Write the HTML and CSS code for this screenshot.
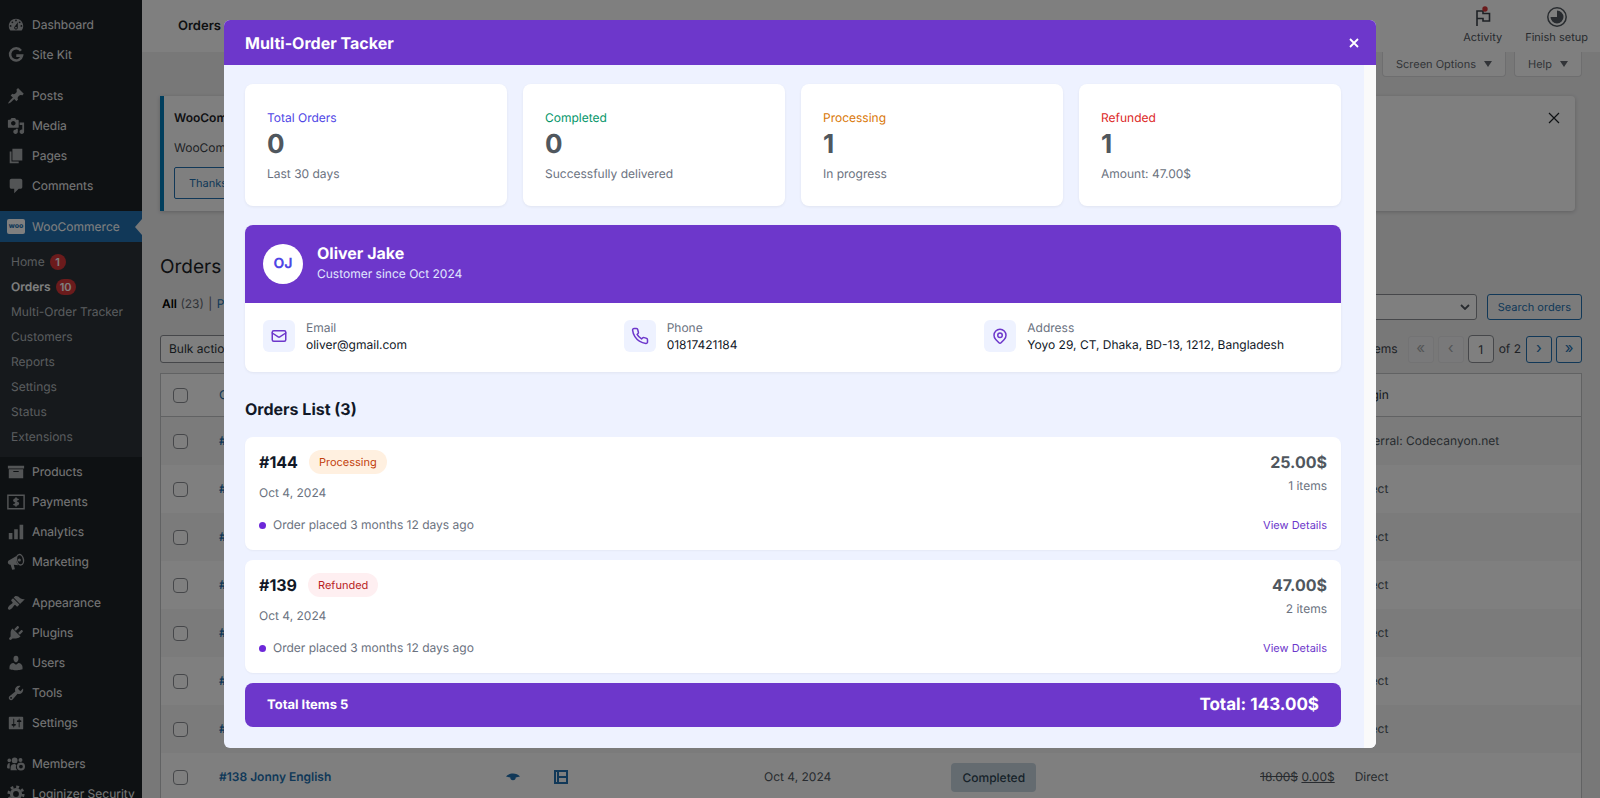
FILE: index.html
```html
<!DOCTYPE html>
<html lang="en">
<head>
<meta charset="utf-8">
<title>Orders</title>
<meta name="viewport" content="width=device-width, initial-scale=1">
<link rel="stylesheet" href="styles.css">
</head>
<body>
<div class="app">
  <nav class="sidebar" aria-label="Main menu">
    <ul class="menu">
      <li><a class="menu-link" href="#"><svg class="menu-icon" viewBox="0 0 20 20"><path d="M3.76 16h12.48c1.1-1.37 1.76-3.11 1.76-5 0-4.42-3.58-8-8-8s-8 3.58-8 8c0 1.89.66 3.63 1.76 5zM10 4c.55 0 1 .45 1 1s-.45 1-1 1-1-.45-1-1 .45-1 1-1zM6 6c.55 0 1 .45 1 1s-.45 1-1 1-1-.45-1-1 .45-1 1-1zm8 0c.55 0 1 .45 1 1s-.45 1-1 1-1-.45-1-1 .45-1 1-1zm-5.370 5.550L12 7v6c0 1.100-.9 2-2 2s-2-.9-2-2c0-.57.24-1.080.63-1.450zM4 10c.55 0 1 .45 1 1s-.45 1-1 1-1-.45-1-1 .45-1 1-1zm12 0c.55 0 1 .45 1 1s-.45 1-1 1-1-.45-1-1 .45-1 1-1zm-5 3c0-.55-.45-1-1-1s-1 .45-1 1 .45 1 1 1 1-.45 1-1z"/></svg>Dashboard</a></li>
      <li><a class="menu-link" href="#"><svg class="menu-icon" viewBox="0 0 20 20"><path fill="none" stroke="currentColor" stroke-width="2.800" d="M15.500 5.300A6.700 6.700 0 1 0 16.700 10.700H10.300"/></svg>Site Kit</a></li>
      <li class="menu-gap"><a class="menu-link" href="#"><svg class="menu-icon" viewBox="0 0 20 20"><path d="M10.440 3.020l1.820-1.820 6.360 6.350-1.830 1.820c-1.050-.68-2.480-.57-3.410.36l-.75.75c-.92.93-1.040 2.350-.35 3.410l-1.830 1.820-2.410-2.410-2.800 2.790c-.42.42-3.380 2.710-3.800 2.290s1.860-3.390 2.280-3.810l2.790-2.790L4.100 9.360l1.830-1.820c1.050.69 2.480.57 3.400-.36l.75-.75c.93-.92 1.050-2.350.36-3.410z"/></svg>Posts</a></li>
      <li><a class="menu-link" href="#"><svg class="menu-icon" viewBox="0 0 20 20"><path fill-rule="evenodd" d="M13 11V4c0-.55-.45-1-1-1h-1.670L9 1H5L3.670 3H2c-.55 0-1 .45-1 1v7c0 .55.45 1 1 1h10c.55 0 1-.45 1-1zM7 4.500c1.380 0 2.500 1.120 2.500 2.500S8.380 9.500 7 9.500 4.500 8.380 4.500 7 5.620 4.500 7 4.500zM14 6h5v10.500c0 1.380-1.120 2.500-2.500 2.500S14 17.880 14 16.500s1.120-2.500 2.500-2.500c.17 0 .34.02.5.05V9h-3V6zm-4 8.050V13h2v3.500c0 1.380-1.120 2.500-2.500 2.500S7 17.880 7 16.500 8.120 14 9.500 14c.17 0 .34.02.5.05z"/></svg>Media</a></li>
      <li><a class="menu-link" href="#"><svg class="menu-icon" viewBox="0 0 20 20"><path d="M6 15V2h11v13H6zm-1 1h8v2H3V5h2v11z"/></svg>Pages</a></li>
      <li><a class="menu-link" href="#"><svg class="menu-icon" viewBox="0 0 20 20"><path d="M5 2h10c1.100 0 2 .9 2 2v7c0 1.100-.9 2-2 2h-2l-5 5v-5H5c-1.100 0-2-.9-2-2V4c0-1.100.9-2 2-2z"/></svg>Comments</a></li>
      <li class="menu-gap current">
        <a class="menu-link menu-link-current" href="#"><span class="woo-icon">woo</span>WooCommerce</a>
        <ul class="submenu">
          <li><a href="#">Home <span class="count">1</span></a></li>
          <li><a class="active" href="#">Orders <span class="count">10</span></a></li>
          <li><a href="#">Multi-Order Tracker</a></li>
          <li><a href="#">Customers</a></li>
          <li><a href="#">Reports</a></li>
          <li><a href="#">Settings</a></li>
          <li><a href="#">Status</a></li>
          <li><a href="#">Extensions</a></li>
        </ul>
      </li>
      <li><a class="menu-link" href="#"><svg class="menu-icon" viewBox="0 0 20 20"><path d="M19 3v3H1V3h18zM2 7h16v10H2V7zm11 3V9H7v1h6z"/></svg>Products</a></li>
      <li><a class="menu-link" href="#"><svg class="menu-icon" viewBox="0 0 20 20"><path fill="none" stroke="currentColor" stroke-width="1.600" d="M1 2.500h18v15H1z"/><path fill="none" stroke="currentColor" stroke-width="2" d="M12.700 7.700C12 6.800 8 6.300 7.700 8.200c-.2 2.200 4.800 1.300 4.800 3.600-.2 2-4.300 1.600-5.200.5M10 5v10"/></svg>Payments</a></li>
      <li><a class="menu-link" href="#"><svg class="menu-icon" viewBox="0 0 20 20"><path d="M2 11h4v7H2zM8 7h4v11H8zM14 2h4v16h-4z"/></svg>Analytics</a></li>
      <li><a class="menu-link" href="#"><svg class="menu-icon" viewBox="0 0 20 20"><path d="M1.500 8.500 11 3c-1.500 3-1 8 1.500 10.500l-5-.5 1.300 5-3 .7L4 13l-1.500-.3C.8 12 .5 9.500 1.500 8.500z"/><ellipse cx="14.500" cy="7.500" rx="3.800" ry="5.800" transform="rotate(-12 14.500 7.500)" fill="none" stroke="currentColor" stroke-width="1.600"/><circle cx="13.800" cy="7.800" r="1.700"/></svg>Marketing</a></li>
      <li class="menu-gap"><a class="menu-link" href="#"><svg class="menu-icon" viewBox="0 0 20 20"><path d="M14.480 11.060L7.410 3.990l1.500-1.500c.5-.56 2.300-.47 3.510.32 1.210.8 1.430 1.280 2.910 2.100 1.180.64 2.450 1.260 4.450.85zm-.71.71L6.700 4.700 4.930 6.470c-.39.39-.39 1.020 0 1.410l1.060 1.060c.39.39.39 1.030 0 1.420-.6.6-1.430 1.110-2.210 1.690-.35.26-.7.53-1.010.84C1.430 14.230.4 16.080 1.400 17.070c.99 1 2.840-.03 4.180-1.360.31-.31.58-.66.85-1.020.57-.78 1.080-1.610 1.690-2.210.39-.39 1.020-.39 1.410 0l1.060 1.060c.39.39 1.020.39 1.410 0z"/></svg>Appearance</a></li>
      <li><a class="menu-link" href="#"><svg class="menu-icon" viewBox="0 0 20 20"><path d="M13.110 4.360L9.870 7.600 8 5.730l3.240-3.240c.35-.34 1.050-.2 1.560.32.52.51.66 1.210.31 1.550zm-8 1.770l.91-1.120 9.010 9.010-1.190.84c-.71.71-2.630 1.160-3.820 1.160H6.140L4.900 17.260c-.59.59-1.540.59-2.120 0-.59-.58-.59-1.530 0-2.120l1.240-1.240v-3.880c0-1.130.4-3.190 1.090-3.890zm7.260 3.970l3.240-3.240c.34-.35 1.040-.21 1.550.31.52.51.66 1.210.31 1.550l-3.240 3.250z"/></svg>Plugins</a></li>
      <li><a class="menu-link" href="#"><svg class="menu-icon" viewBox="0 0 20 20"><path d="M10 9.250c-2.270 0-2.730-3.440-2.730-3.440C7 4.020 7.820 2 9.970 2c2.160 0 2.980 2.020 2.710 3.810 0 0-.41 3.440-2.680 3.440zm0 2.570L12.720 10c2.390 0 4.520 2.330 4.520 4.530v2.490s-3.650 1.130-7.240 1.130c-3.650 0-7.240-1.130-7.240-1.130v-2.490c0-2.250 1.940-4.480 4.470-4.480z"/></svg>Users</a></li>
      <li><a class="menu-link" href="#"><svg class="menu-icon" viewBox="0 0 20 20"><path d="M16.680 9.770c-1.340 1.340-3.300 1.670-4.950.99l-5.410 6.520c-.99.99-2.590.99-3.580 0s-.99-2.590 0-3.570l6.520-5.420c-.68-1.650-.35-3.610.99-4.950 1.280-1.280 3.120-1.620 4.720-1.060l-2.890 2.890 2.820 2.820 2.860-2.870c.53 1.580.18 3.390-1.080 4.650zM3.810 16.210c.4.39 1.040.39 1.430 0 .4-.4.4-1.040 0-1.430-.39-.4-1.030-.4-1.430 0-.39.39-.39 1.030 0 1.430z"/></svg>Tools</a></li>
      <li><a class="menu-link" href="#"><svg class="menu-icon" viewBox="0 0 20 20"><path d="M18 16V4c0-.55-.45-1-1-1H3c-.55 0-1 .45-1 1v12c0 .55.45 1 1 1h14c.55 0 1-.45 1-1zM8 11h1c.55 0 1 .45 1 1s-.45 1-1 1H8v1.500c0 .28-.22.5-.5.5s-.5-.22-.5-.5V13H6c-.55 0-1-.45-1-1s.45-1 1-1h1V5.500c0-.28.22-.5.5-.5s.5.22.5.5V11zm5-2h-1c-.55 0-1-.45-1-1s.45-1 1-1h1V5.500c0-.28.22-.5.5-.5s.5.22.5.5V7h1c.55 0 1 .45 1 1s-.45 1-1 1h-1v5.500c0 .28-.22.5-.5.5s-.5-.22-.5-.5V9z"/></svg>Settings</a></li>
      <li class="menu-gap"><a class="menu-link" href="#"><svg class="menu-icon" viewBox="0 0 20 20"><circle cx="2.500" cy="6" r="2"/><circle cx="8.500" cy="6" r="3.200"/><path d="M0 14c0-3 1-5 3-5v6H1zM4 17v-3c0-3 2-4 4.500-4l2 1c-1 2-1 4 1 6z"/><circle cx="15.500" cy="12.800" r="3.300" fill="none" stroke="currentColor" stroke-width="2.400"/><circle cx="15" cy="5.500" r="2.200"/></svg>Members</a></li>
      <li><a class="menu-link" href="#"><svg class="menu-icon" viewBox="0 0 20 20"><circle cx="10" cy="10" r="5" fill="none" stroke="currentColor" stroke-width="3.500"/><circle cx="10" cy="10" r="8" fill="none" stroke="currentColor" stroke-width="3" stroke-dasharray="3.140 3.140"/></svg>Loginizer Security</a></li>
    </ul>
  </nav>

  <div class="main">
    <header class="topbar">
      <h2 class="topbar-title">Orders</h2>
      <div class="topbar-actions">
        <button class="top-action" type="button"><svg width="22" height="22" viewBox="0 0 22 22"><path d="M5 20V5h6v2.500h6.500V15H11v-2.500H5" fill="none" stroke="#3c434a" stroke-width="1.600"/><circle cx="13" cy="3" r="2.700" fill="#d63638"/></svg>Activity</button>
        <button class="top-action" type="button"><svg width="22" height="22" viewBox="0 0 22 22"><circle cx="11" cy="11" r="9.200" fill="none" stroke="#50575e" stroke-width="1.500"/><path d="M11 4.500a6.500 6.500 0 1 1-6.500 6.500H11z" fill="#50575e"/></svg>Finish setup</button>
      </div>
    </header>

    <div class="page">
      <div class="screen-tabs">
        <button class="screen-tab" type="button">Screen Options <span class="caret"></span></button>
        <button class="screen-tab" type="button">Help <span class="caret"></span></button>
      </div>

      <section class="notice">
        <div class="notice-body">
          <h3>WooCommerce</h3>
          <p>WooCommerce</p>
          <button class="btn-outline notice-btn" type="button">Thanks</button>
        </div>
        <button class="notice-close" type="button" aria-label="Dismiss"><svg width="12" height="12" viewBox="0 0 12 12"><path d="M1 1l10 10M11 1L1 11" stroke="#1d2327" stroke-width="1.200"/></svg></button>
      </section>

      <h1 class="page-title">Orders</h1>

      <div class="filters">
        <div class="status-links"><a class="all" href="#">All</a> (23) <span class="sep">|</span> <a href="#">Processing</a></div>
        <div class="search-row">
          <span class="select-wrap select-search"><select aria-label="Search filter"><option>All</option></select><svg class="chev" width="10" height="6" viewBox="0 0 10 6"><path d="M1 1l4 4 4-4" fill="none" stroke="#50575e" stroke-width="1.800"/></svg></span>
          <button class="btn-outline" type="button">Search orders</button>
        </div>
      </div>

      <div class="filters tablenav">
        <span class="select-wrap select-bulk"><select aria-label="Bulk actions"><option>Bulk actions</option></select></span>
        <div class="pagination">
          <span class="items">23 items</span>
          <button class="page-btn" type="button" disabled aria-label="First page">«</button>
          <button class="page-btn" type="button" disabled aria-label="Previous page">‹</button>
          <input class="page-input" type="text" value="1" aria-label="Current page">
          <span class="of">of 2</span>
          <button class="page-btn" type="button" aria-label="Next page">›</button>
          <button class="page-btn" type="button" aria-label="Last page">»</button>
        </div>
      </div>

      <table class="orders">
        <colgroup><col class="c-check"><col class="c-order"><col class="c-eye"><col class="c-film"><col class="c-date"><col class="c-status"><col class="c-total"><col></colgroup>
        <thead>
          <tr><th><input type="checkbox" aria-label="Select all"></th><th><a href="#">Order</a></th><th></th><th></th><th></th><th></th><th></th><th>Origin</th></tr>
        </thead>
        <tbody>
          <tr><td><input type="checkbox" aria-label="Select order"></td><td><a class="order-link" href="#">#145</a></td><td></td><td></td><td></td><td></td><td></td><td>Referral: Codecanyon.net</td></tr>
          <tr><td><input type="checkbox" aria-label="Select order"></td><td><a class="order-link" href="#">#144</a></td><td></td><td></td><td></td><td></td><td></td><td>Direct</td></tr>
          <tr><td><input type="checkbox" aria-label="Select order"></td><td><a class="order-link" href="#">#143</a></td><td></td><td></td><td></td><td></td><td></td><td>Direct</td></tr>
          <tr><td><input type="checkbox" aria-label="Select order"></td><td><a class="order-link" href="#">#142</a></td><td></td><td></td><td></td><td></td><td></td><td>Direct</td></tr>
          <tr><td><input type="checkbox" aria-label="Select order"></td><td><a class="order-link" href="#">#141</a></td><td></td><td></td><td></td><td></td><td></td><td>Direct</td></tr>
          <tr><td><input type="checkbox" aria-label="Select order"></td><td><a class="order-link" href="#">#140</a></td><td></td><td></td><td></td><td></td><td></td><td>Direct</td></tr>
          <tr><td><input type="checkbox" aria-label="Select order"></td><td><a class="order-link" href="#">#139</a></td><td></td><td></td><td></td><td></td><td></td><td>Direct</td></tr>
          <tr><td><input type="checkbox" aria-label="Select order"></td><td><a class="order-link" href="#">#138 Jonny English</a></td>
            <td><svg class="cell-icon" width="14" height="14" viewBox="0 0 14 14"><path d="M0 6.500C3 2.500 11 2.500 14 6.500L9.700 7.500a2.700 2.700 0 0 1-5.400 0z" fill="#2271b1"/></svg></td>
            <td><svg class="cell-icon" width="14" height="14" viewBox="0 0 14 14"><path d="M1 1h12v12H1zM4 1v12M4 7h9" fill="none" stroke="#2271b1" stroke-width="2"/></svg></td>
            <td>Oct 4, 2024</td><td><span class="status-pill">Completed</span></td><td class="amount"><del>18.00$</del> <ins>0.00$</ins></td><td>Direct</td></tr>
        </tbody>
      </table>
    </div>
  </div>
</div>

<div class="overlay">
  <div class="modal" role="dialog" aria-modal="true" aria-labelledby="modal-title">
    <header class="modal-head">
      <h2 id="modal-title">Multi-Order Tacker</h2>
      <button class="modal-close" type="button" aria-label="Close"><svg width="10" height="10" viewBox="0 0 10 10"><path d="M1 1l8 8M9 1L1 9" stroke="#fff" stroke-width="1.800"/></svg></button>
    </header>
    <div class="modal-body">
      <div class="stats">
        <article class="stat"><h3 class="indigo">Total Orders</h3><strong>0</strong><p>Last 30 days</p></article>
        <article class="stat"><h3 class="green">Completed</h3><strong>0</strong><p>Successfully delivered</p></article>
        <article class="stat"><h3 class="amber">Processing</h3><strong>1</strong><p>In progress</p></article>
        <article class="stat"><h3 class="red">Refunded</h3><strong>1</strong><p>Amount: 47.00$</p></article>
      </div>

      <section class="customer">
        <div class="customer-head">
          <span class="avatar">OJ</span>
          <div class="customer-name"><h3>Oliver Jake</h3><p>Customer since Oct 2024</p></div>
        </div>
        <div class="contacts">
          <div class="contact"><span class="contact-icon"><svg viewBox="0 0 24 24"><rect x="3" y="5" width="18" height="14" rx="2"/><path d="M3 8l7.900 5.260a2 2 0 0 0 2.200 0L21 8"/></svg></span><div><span class="contact-label">Email</span><span class="contact-value">oliver@gmail.com</span></div></div>
          <div class="contact"><span class="contact-icon"><svg viewBox="0 0 24 24"><path d="M22 16.920v3a2 2 0 0 1-2.180 2 19.790 19.790 0 0 1-8.630-3.070 19.500 19.500 0 0 1-6-6 19.790 19.790 0 0 1-3.070-8.670A2 2 0 0 1 4.110 2h3a2 2 0 0 1 2 1.720c.13.96.36 1.900.7 2.810a2 2 0 0 1-.45 2.110L8.090 9.910a16 16 0 0 0 6 6l1.270-1.270a2 2 0 0 1 2.110-.45c.91.34 1.850.57 2.810.7A2 2 0 0 1 22 16.920z"/></svg></span><div><span class="contact-label">Phone</span><span class="contact-value">01817421184</span></div></div>
          <div class="contact"><span class="contact-icon"><svg viewBox="0 0 24 24"><path d="M17.657 16.657L13.414 20.900a2 2 0 0 1-2.827 0l-4.244-4.243a8 8 0 1 1 11.314 0z"/><circle cx="12" cy="11" r="3"/></svg></span><div><span class="contact-label">Address</span><span class="contact-value">Yoyo 29, CT, Dhaka, BD-13, 1212, Bangladesh</span></div></div>
        </div>
      </section>

      <h3 class="list-title">Orders List (3)</h3>

      <div class="order-list">
        <article class="order">
          <div class="order-row"><div class="order-id"><h4>#144</h4><span class="badge badge-processing">Processing</span></div><strong class="price">25.00$</strong></div>
          <div class="order-row order-meta"><span>Oct 4, 2024</span><span class="qty">1 items</span></div>
          <div class="order-row order-foot"><span class="placed">Order placed 3 months 12 days ago</span><a href="#">View Details</a></div>
        </article>
        <article class="order">
          <div class="order-row"><div class="order-id"><h4>#139</h4><span class="badge badge-refunded">Refunded</span></div><strong class="price">47.00$</strong></div>
          <div class="order-row order-meta"><span>Oct 4, 2024</span><span class="qty">2 items</span></div>
          <div class="order-row order-foot"><span class="placed">Order placed 3 months 12 days ago</span><a href="#">View Details</a></div>
        </article>
        <div class="total-bar"><span>Total Items 5</span><strong>Total: 143.00$</strong></div>
      </div>
    </div>
  </div>
</div>
</body>
</html>
```
FILE: styles.css
```css
* { box-sizing: border-box; }
html, body { height: 100%; }
body {
  margin: 0;
  overflow: hidden;
  background: #f0f0f1;
  color: #3c434a;
  font: 12px/18px Inter, "Liberation Sans", sans-serif;
  text-rendering: geometricPrecision;
}
h1, h2, h3, h4, p, ul { margin: 0; padding: 0; font-weight: 400; font-size: 12px; }
ul { list-style: none; }
a { color: #2271b1; text-decoration: none; }
button, input, select { font: inherit; color: inherit; margin: 0; text-rendering: inherit; }
button { cursor: pointer; }
.app { display: flex; height: 100%; overflow: hidden; }

/* Sidebar */
.sidebar { flex: 0 0 142px; min-width: 0; background: #1d2327; padding-top: 10px; }
.menu-gap { margin-top: 11px; }
.menu-gap.current { margin-top: 10px; }
.menu-link {
  display: flex; align-items: center; gap: 7px;
  height: 30px; padding-left: 7px;
  color: #f0f0f1; white-space: nowrap;
}
.menu-icon { flex: none; width: 18px; height: 18px; fill: #a7aaad; color: #a7aaad; }
.menu-link-current { position: relative; height: 31px; background: #2271b1; color: #fff; }
.menu-link-current::after {
  content: ""; position: absolute; right: 0; top: 8px;
  border: 8px solid transparent; border-left: 0; border-right: 7px solid #f0f0f1;
}
.woo-icon {
  width: 18px; height: 15px; border-radius: 2px; background: #fff; color: #2271b1;
  font-size: 7px; line-height: 14px; font-weight: 800; text-align: center;
}
.submenu { background: #2c3338; padding: 7px 0 8px; }
.submenu a {
  display: flex; align-items: center; gap: 5px;
  height: 25px; padding-left: 11px; color: #b4b9be; white-space: nowrap;
}
.submenu .active { color: #fff; font-weight: 600; }
.count {
  min-width: 16px; height: 16px; padding: 0 4px; border-radius: 8px;
  background: #d63638; color: #fff; font-size: 11px; line-height: 16px; font-weight: 600; text-align: center;
}

/* Page behind the dialog */
.main { flex: 1; min-width: 0; }
.topbar {
  display: flex; align-items: center; justify-content: space-between;
  height: 52px; padding: 0 12px 0 36px; background: #fff;
}
.topbar-title { font-size: 13px; font-weight: 600; color: #1d2327; }
.topbar-actions { display: flex; gap: 23px; }
.top-action {
  display: flex; flex-direction: column; align-items: center;
  border: 0; padding: 0; background: none; color: #50575e; font-size: 11px;
}
.page { padding: 0 18px; }
.screen-tabs { display: flex; justify-content: flex-end; gap: 8px; }
.screen-tab {
  display: flex; align-items: center; gap: 8px; height: 25px; padding: 0 13px;
  border: 1px solid #dcdcde; border-top: 0; border-radius: 0 0 4px 4px; background: #fff;
  color: #646970; font-size: 11px;
}
.caret { border: 4px solid transparent; border-top: 6px solid #646970; border-bottom: 0; }
.notice {
  display: flex; justify-content: space-between; align-items: flex-start;
  margin: 19px 7px 0 0; min-height: 114px; padding: 13px 12px 12px 10px;
  border-left: 4px solid #007cba; border-radius: 0 4px 4px 0; background: #fff;
  box-shadow: 0 1px 4px rgba(0, 0, 0, .2);
}
.notice h3 { font-weight: 600; color: #1d2327; }
.notice p { margin: 12px 0 10px; }
.btn-outline {
  height: 26px; padding: 0 10px; border: 1px solid #2271b1; border-radius: 3px;
  background: #f6f7f7; color: #2271b1; font-size: 11px; white-space: nowrap;
}
.notice-btn { height: 32px; padding: 0 14px; border-radius: 2px; background: none; }
.notice-close { border: 0; background: none; padding: 3px; line-height: 0; }
.page-title { margin-top: 43px; font-size: 19px; line-height: 26px; color: #1d2327; }
.filters { display: flex; justify-content: space-between; align-items: center; }
.page-title + .filters { margin-top: 14px; }
.status-links { margin-bottom: 6px; padding-left: 2px; color: #646970; }
.status-links .all { color: #000; font-weight: 600; }
.sep { margin: 0 1px; }
.search-row { display: flex; gap: 10px; }
.select-wrap { position: relative; display: inline-flex; }
.select-wrap select {
  appearance: none; width: 100%; height: 26px; padding: 0 8px;
  border: 1px solid #8c8f94; border-radius: 3px; background: #fff; color: #2c3338;
}
.select-search { width: 124px; }
.select-bulk { width: 150px; }
.select-bulk select { height: 28px; }
.chev { position: absolute; right: 7px; top: 10px; }
.tablenav { margin-top: 15px; }
.pagination { display: flex; align-items: center; gap: 4px; }
.items { margin-right: 6px; }
.page-btn {
  width: 26px; height: 27px; padding: 0 0 2px; border: 1px solid #2271b1; border-radius: 3px;
  background: #f6f7f7; color: #2271b1; font-size: 15px;
}
.page-btn:disabled { border-color: #e6e6e8; background: #f3f3f4; color: #a7aaad; }
.page-input {
  width: 26px; height: 28px; padding: 0; border: 1px solid #8c8f94; border-radius: 4px;
  background: #fff; text-align: center;
}
.of { margin: 0 1px; }
.orders {
  width: 100%; margin-top: 10px; table-layout: fixed; border-collapse: separate; border-spacing: 0;
  border: 1px solid #c3c4c7; background: #fff; color: #50575e;
}
.c-check { width: 48px; }
.c-order { width: 20%; }
.c-eye { width: 48px; }
.c-film { width: 15%; }
.c-date { width: 13.2%; }
.c-status { width: 16.2%; }
.c-total { width: 12.2%; }
.orders th { height: 43px; padding: 0 10px; border-bottom: 1px solid #c3c4c7; text-align: left; font-weight: 400; color: #2c3338; }
.orders td { height: 48px; padding: 0 10px; white-space: nowrap; }
.orders th:first-child, .orders td:first-child { padding: 0 0 0 12px; }
.orders tbody tr:nth-child(odd) { background: #f6f7f7; }
.orders input {
  appearance: none; display: block; width: 15px; height: 15px;
  border: 1px solid #8c8f94; border-radius: 4px; background: #fff;
}
.order-link { font-weight: 600; }
.cell-icon { display: block; margin-left: 3px; }
.status-pill {
  display: inline-block; padding: 0 11px; border-radius: 4px;
  background: #c8d7e1; color: #2e4453; line-height: 29px; font-weight: 500;
}
.amount { text-align: right; }

/* Dialog */
.overlay {
  position: fixed; inset: 0; display: flex; justify-content: center; align-items: flex-start;
  padding: 20px; background: rgba(0, 0, 0, .5);
}
.modal { width: 100%; max-width: 1152px; border-radius: 6px; overflow: hidden; background: #eef2ff; }
.modal-head {
  display: flex; align-items: center; justify-content: space-between;
  height: 45px; padding: 0 17px 0 21px; background: #6d37cb;
}
.modal-head h2 { font-size: 16px; font-weight: 700; color: #fff; }
.modal-close { border: 0; background: none; padding: 0; width: 10px; height: 10px; line-height: 0; }
.modal-body { padding: 19px 23px 21px 21px; border-right: 12px solid #fafafa; }
.stats { display: grid; grid-template-columns: repeat(4, 1fr); gap: 16px; }
.stat {
  padding: 23px 22px; border-radius: 8px; background: #fff;
  box-shadow: 0 1px 3px rgba(0, 0, 0, .06);
}
.stat h3 { line-height: 21px; }
.stat strong { display: block; font-size: 26px; line-height: 34px; font-weight: 700; color: #50575e; }
.stat p { margin-top: 3px; line-height: 18px; color: #6b7280; }
.indigo { color: #4f46e5; }
.green { color: #059669; }
.amber { color: #d97706; }
.red { color: #dc2626; }
.customer { margin-top: 19px; border-radius: 8px; overflow: hidden; background: #fff; box-shadow: 0 1px 3px rgba(0, 0, 0, .06); }
.customer-head { display: flex; align-items: center; gap: 14px; height: 78px; padding: 0 18px; background: #6d37cb; }
.customer-name { padding-bottom: 4px; }
.avatar {
  width: 40px; height: 40px; border-radius: 50%; background: #fff; color: #4f46e5;
  font-size: 14px; line-height: 40px; font-weight: 700; text-align: center;
}
.customer-head h3 { font-size: 16px; line-height: 24px; font-weight: 700; color: #fff; }
.customer-head p { line-height: 18px; color: #e0e7ff; }
.contacts { display: grid; grid-template-columns: repeat(3, 1fr); gap: 22px; padding: 16px 18px 19px; }
.contact { display: flex; align-items: center; gap: 11px; }
.contact-icon { display: flex; flex: none; width: 32px; height: 32px; align-items: center; justify-content: center; border-radius: 6px; background: #eef2ff; }
.contact-icon svg { width: 18px; height: 18px; fill: none; stroke: #6d37cb; stroke-width: 2; stroke-linecap: round; stroke-linejoin: round; }
.contact-label, .contact-value { display: block; line-height: 17px; }
.contact-label { color: #6b7280; }
.contact-value { color: #111827; }
.list-title { margin: 25px 0 16px; font-size: 16px; line-height: 24px; font-weight: 700; color: #111827; }
.order-list { display: flex; flex-direction: column; gap: 10px; }
.order { padding: 13px 14px 16px; border-radius: 8px; background: #fff; box-shadow: 0 1px 2px rgba(0, 0, 0, .04); }
.order-row { display: flex; align-items: center; justify-content: space-between; color: #6b7280; }
.order-id { display: flex; align-items: center; gap: 11px; }
.order-id h4 { font-size: 16px; font-weight: 700; color: #111827; }
.badge { padding: 0 10px; border-radius: 12px; font-size: 11px; line-height: 24px; }
.badge-processing { background: #fff0e0; color: #c2410c; }
.badge-refunded { background: #feeff1; color: #b91c1c; }
.price { font-size: 16px; font-weight: 700; color: #50575e; }
.order-meta { align-items: flex-start; margin-top: 3px; padding-top: 7px; }
.order-meta .qty { margin-top: -7px; }
.order-foot { margin-top: 14px; line-height: 18px; }
.placed { display: flex; align-items: center; gap: 7px; }
.placed::before { content: ""; width: 7px; height: 7px; border-radius: 50%; background: #6d28d9; }
.order-foot a { color: #6d37cb; font-size: 11px; }
.total-bar {
  display: flex; align-items: center; justify-content: space-between;
  height: 44px; padding: 0 22px; border-radius: 8px; background: #6d37cb; color: #fff; font-size: 13px; font-weight: 700;
}
.total-bar strong { font-size: 17px; font-weight: 700; }
```
